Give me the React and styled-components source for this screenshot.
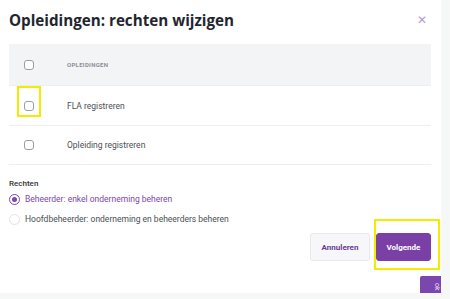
import styled, { createGlobalStyle } from 'styled-components'

const GlobalStyle = createGlobalStyle`
  html, body {
    margin: 0;
    padding: 0;
    background: #f6f7f7;
    font-family: Roboto, 'Liberation Sans', sans-serif;
  }
`

const Page = styled.div`
  position: relative;
  width: 450px;
  height: 299px;
  overflow: hidden;
  background: #f6f7f7;
`

const Modal = styled.div`
  width: 441px;
  height: 293px;
  box-sizing: border-box;
  background: #fff;
  padding: 0 10px 0 9px;
  display: flex;
  flex-direction: column;
`

const Header = styled.div`
  height: 44px;
  display: flex;
  align-items: center;
  justify-content: space-between;
  padding-bottom: 4px;
  box-sizing: border-box;
`

const Title = styled.h2`
  margin: 0;
  font-family: 'Open Sans', sans-serif;
  font-weight: 700;
  font-size: 15.2px;
  color: #1f2630;
`

const Close = styled.span`
  color: #b89ad6;
  font-size: 12px;
  font-family: 'DejaVu Sans', sans-serif;
  margin-right: 4px;
  line-height: 1;
`

const Table = styled.div`
  display: flex;
  flex-direction: column;
`

const Row = styled.div`
  display: flex;
  align-items: center;
  height: ${(p) => p.h}px;
  background: ${(p) => (p.head ? '#f3f4f6' : '#fff')};
  border-bottom: 1px solid #eceef1;
`

const CheckCell = styled.div`
  position: relative;
  width: 58px;
  padding-left: 15px;
  box-sizing: border-box;
  display: flex;
  align-items: center;
`

const Checkbox = styled.span`
  display: block;
  width: 8px;
  height: 8px;
  border: 1px solid #9a9ea3;
  border-radius: 3px;
  background: #fff;
`

const Highlight = styled.span`
  position: absolute;
  border: 2px solid #f2ec00;
  box-sizing: border-box;
  pointer-events: none;
`

const HeadText = styled.span`
  font-size: 6px;
  font-weight: 700;
  letter-spacing: 0.3px;
  color: #8b9096;
  text-transform: uppercase;
`

const CellText = styled.span`
  font-size: 8.5px;
  color: #4a4f55;
`

const Section = styled.div`
  margin-top: 14px;
  display: flex;
  flex-direction: column;
`

const Label = styled.div`
  font-size: 8px;
  line-height: 10px;
  font-weight: 500;
  color: #333;
`

const RadioRow = styled.label`
  display: flex;
  align-items: center;
  gap: 5px;
  height: 20px;
  font-size: 8.5px;
  color: ${(p) => (p.checked ? '#7d47ab' : '#4a4f55')};
`

const Radio = styled.span`
  width: 9px;
  height: 9px;
  border-radius: 50%;
  border: 1px solid ${(p) => (p.checked ? '#7d47ab' : '#e0e2e5')};
  display: flex;
  align-items: center;
  justify-content: center;
  background: #fff;
  &::after {
    content: '';
    width: 5px;
    height: 5px;
    border-radius: 50%;
    background: ${(p) => (p.checked ? '#7d47ab' : 'transparent')};
  }
`

const Actions = styled.div`
  display: flex;
  justify-content: flex-end;
  gap: 6px;
  margin-top: 4px;
`

const Button = styled.button`
  position: relative;
  height: 28px;
  padding: 0;
  width: ${(p) => p.w}px;
  border-radius: 3px;
  font-family: Roboto, sans-serif;
  font-weight: 700;
  font-size: 8px;
  border: 1px solid ${(p) => (p.primary ? '#7b40a6' : '#e8e9ee')};
  background: ${(p) => (p.primary ? '#7b40a6' : '#f7f7fa')};
  color: ${(p) => (p.primary ? '#fff' : '#6a3b94')};
  overflow: visible;
`

const FeedbackTab = styled.div`
  position: absolute;
  left: 420px;
  top: 276px;
  width: 21px;
  height: 17px;
  background: #7b46ad;
  border-radius: 2px 0 0 0;
  display: flex;
  justify-content: center;
  align-items: flex-start;
  color: #e9dff3;
  font-size: 7px;
  writing-mode: vertical-rl;
  padding-top: 4px;
  box-sizing: border-box;
`

const rows = ['FLA registreren', 'Opleiding registreren']

export default function App() {
  return (
    <Page>
      <GlobalStyle />
      <Modal>
        <Header>
          <Title>Opleidingen: rechten wijzigen</Title>
          <Close>✕</Close>
        </Header>
        <Table>
          <Row head h={41}>
            <CheckCell>
              <Checkbox />
            </CheckCell>
            <HeadText>Opleidingen</HeadText>
          </Row>
          {rows.map((r, i) => (
            <Row key={r} h={i === 0 ? 39 : 38}>
              <CheckCell>
                <Checkbox />
                {i === 0 && (
                  <Highlight style={{ left: 8, top: -15, width: 24, height: 31 }} />
                )}
              </CheckCell>
              <CellText>{r}</CellText>
            </Row>
          ))}
        </Table>
        <Section>
          <Label>Rechten</Label>
          <RadioRow checked>
            <Radio checked />
            Beheerder: enkel onderneming beheren
          </RadioRow>
          <RadioRow>
            <Radio />
            Hoofdbeheerder: onderneming en beheerders beheren
          </RadioRow>
        </Section>
        <Actions>
          <Button w={60}>Annuleren</Button>
          <Button primary w={55}>
            Volgende
            <Highlight style={{ left: -3, top: -15, width: 66, height: 51 }} />
          </Button>
        </Actions>
      </Modal>
      <FeedbackTab>ok</FeedbackTab>
    </Page>
  )
}
